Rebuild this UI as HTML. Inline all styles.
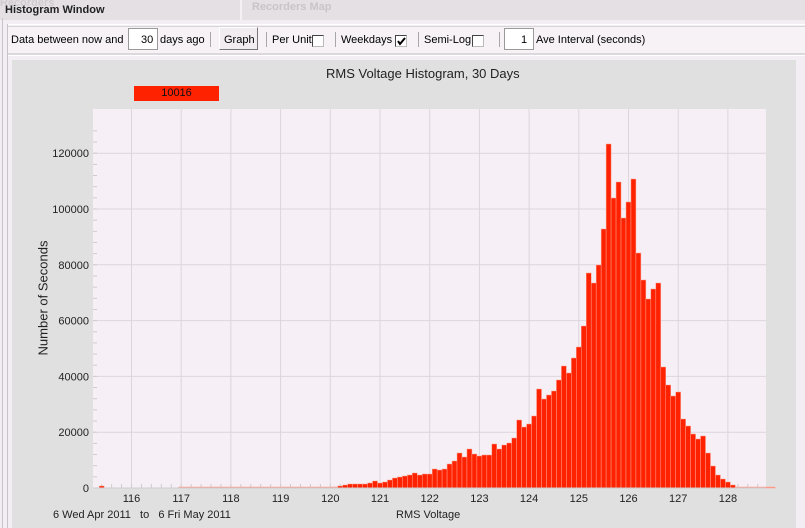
<!DOCTYPE html>
<html><head><meta charset="utf-8"><style>
body{margin:0;width:805px;height:528px;overflow:hidden;background:#f3eef3;font-family:"Liberation Sans",sans-serif;position:relative}
.a{position:absolute}
.t{font-size:11px;color:#000;white-space:nowrap}
.box{position:absolute;background:#fff;border:1px solid #9a9a9a;box-sizing:border-box}
.cb{position:absolute;background:#fff;box-sizing:border-box;border:1px solid #444;border-right-color:#bbb;border-bottom-color:#bbb;width:12px;height:12px;top:35px}
.sep{position:absolute;width:1px;height:15px;background:#a8a8a8;top:32px}
</style></head><body>
<div class="a" style="left:0;top:0;width:805px;height:20px;background:#e4e0e4"></div>
<div class="a" style="left:240px;top:0;width:2px;height:20px;background:#f4f0f4"></div>
<div class="a t" style="left:252px;top:1px;font-weight:bold;color:#c8c4c8">Recorders Map</div>
<div class="a t" style="left:0px;top:-3px;font-weight:bold;color:#d0ccd0">Recorders</div>
<div class="a t" style="left:5px;top:4px;font-weight:bold;color:#222">Histogram Window</div>
<div class="a" style="left:2px;top:18px;width:1px;height:510px;background:#c8c4c8"></div>
<div class="a" style="left:7px;top:24px;width:798px;height:1px;background:#fff"></div>
<div class="a" style="left:7px;top:24px;width:1px;height:504px;background:#c8c4c8"></div>
<div class="a" style="left:8px;top:26px;width:797px;height:26px;background:#f6f2f6;border-top:1px solid #d8d4d8;border-bottom:2px solid #ddd8dd"></div>
<div class="a t" style="left:11px;top:34px">Data between now and</div>
<div class="box" style="left:128px;top:28px;width:30px;height:22px"></div>
<div class="a t" style="left:141px;top:34px">30</div>
<div class="a t" style="left:160px;top:34px">days ago</div>
<div class="sep" style="left:210px"></div>
<div class="a" style="left:219px;top:27px;width:39px;height:23px;box-sizing:border-box;border:1px solid #fff;border-right-color:#777;border-bottom-color:#777;background:#f0ecf0"></div>
<div class="a t" style="left:224px;top:34px">Graph</div>
<div class="sep" style="left:266px"></div>
<div class="a t" style="left:272px;top:34px">Per Unit</div>
<div class="cb" style="left:312px"></div>
<div class="sep" style="left:335px"></div>
<div class="a t" style="left:341px;top:34px">Weekdays</div>
<div class="cb" style="left:395px"></div>
<svg class="a" style="left:396px;top:36px" width="10" height="10"><path d="M2 5 L4 8 L9 2" stroke="#000" stroke-width="2" fill="none"/></svg>
<div class="sep" style="left:418px"></div>
<div class="a t" style="left:424px;top:34px">Semi-Log</div>
<div class="cb" style="left:472px"></div>
<div class="sep" style="left:499px"></div>
<div class="box" style="left:504px;top:28px;width:30px;height:22px"></div>
<div class="a t" style="left:521px;top:34px">1</div>
<div class="a t" style="left:536px;top:34px">Ave Interval (seconds)</div>
<div class="a" style="left:12px;top:60px;width:784px;height:468px;background:#e0e0e0"></div>
<div class="a" style="left:796px;top:56px;width:9px;height:472px;background:#f3eef3"></div>
<div class="a" style="left:8px;top:55px;width:797px;height:1px;background:#fff"></div>
<div class="a" style="left:326px;top:66px;font-size:13px;color:#222;white-space:nowrap">RMS Voltage Histogram, 30 Days</div>
<div class="a" style="left:134px;top:86px;width:85px;height:15px;background:#ff2200;text-align:center;font-size:11px;line-height:15px;color:#111">10016</div>
<svg id="s" class="a" style="left:0;top:0" width="805" height="528"></svg>
<div class="a t" style="top:298px;transform:translate(-50%,-50%) rotate(-90deg);font-size:13px;color:#222;left:43px">Number of Seconds</div>
<div class="a t" style="left:53px;top:509px;color:#222">6 Wed Apr 2011 &nbsp;&nbsp;to &nbsp;&nbsp;6 Fri May 2011</div>
<div class="a t" style="left:396px;top:509px;color:#222">RMS Voltage</div>
<script>
var s='',L=93,R=766,T=109,B=488;
function X(v){return 131.5+(v-116)*49.7}
function Y(n){return B-n/20000*55.8}
s+='<rect x="'+L+'" y="'+T+'" width="'+(R-L)+'" height="'+(B-T)+'" fill="#f6f0f6"/>';
for(var v=116;v<=128;v++){s+='<line x1="'+X(v)+'" y1="'+T+'" x2="'+X(v)+'" y2="'+B+'" stroke="#dcd6dc"/>';
s+='<text x="'+X(v)+'" y="502" font-size="11" text-anchor="middle" fill="#222" font-family="Liberation Sans">'+v+'</text>';}
for(var n=20000;n<=120000;n+=20000){s+='<line x1="'+L+'" y1="'+Y(n)+'" x2="'+R+'" y2="'+Y(n)+'" stroke="#dcd6dc"/>';}
for(var n=0;n<=128000;n+=4000){s+='<line x1="'+L+'" y1="'+Y(n)+'" x2="'+(L+4)+'" y2="'+Y(n)+'" stroke="#ccc"/>';}
for(var n=0;n<=120000;n+=20000){s+='<text x="89" y="'+(Y(n)+4)+'" font-size="11" text-anchor="end" fill="#222" font-family="Liberation Sans">'+n+'</text>';}
for(var v=115.4;v<128.8;v+=0.2){s+='<line x1="'+X(v)+'" y1="'+(B-4)+'" x2="'+X(v)+'" y2="'+B+'" stroke="#ccc"/>';}
var h=[];
for(var v=117;v<120.1;v+=0.1)h.push([v,1]);
var l=[1,2,3,4,4,4,4,5,7,5,6,8,10,11,12,13,15,13,14,14,19,18,19,24,27,35,31];
for(var i=0;i<l.length;i++)h.push([120.1+i*0.1,l[i]]);
var r=[39,34,32,33,33,44,39,43,45,50,68,61,64,72,99,89,93,97,108,122,115,130,141,162,215,205,223,259,344,290,306,270,286,309,235,208,189,199,205,121,103,92,96,69,62,54,49,52,35,22,13,9,6,3,1,1,1,1,1,1,1,1];
for(var i=0;i<r.length;i++)h.push([122.8+i*0.1,r[i]]);
h.push([115.4,2]);
h.forEach(function(b){var x=X(b[0])-2.5;s+='<rect x="'+x+'" y="'+(B-b[1])+'" width="4.97" height="'+b[1]+'" fill="'+(b[1]<2?'#ff9080':'#ff2200')+'" stroke="#ffa090" stroke-width="0.5"/>';});
s+='<line x1="'+L+'" y1="'+B+'" x2="'+R+'" y2="'+B+'" stroke="#ccc"/>';
document.getElementById('s').innerHTML=s;
</script>
</body></html>
